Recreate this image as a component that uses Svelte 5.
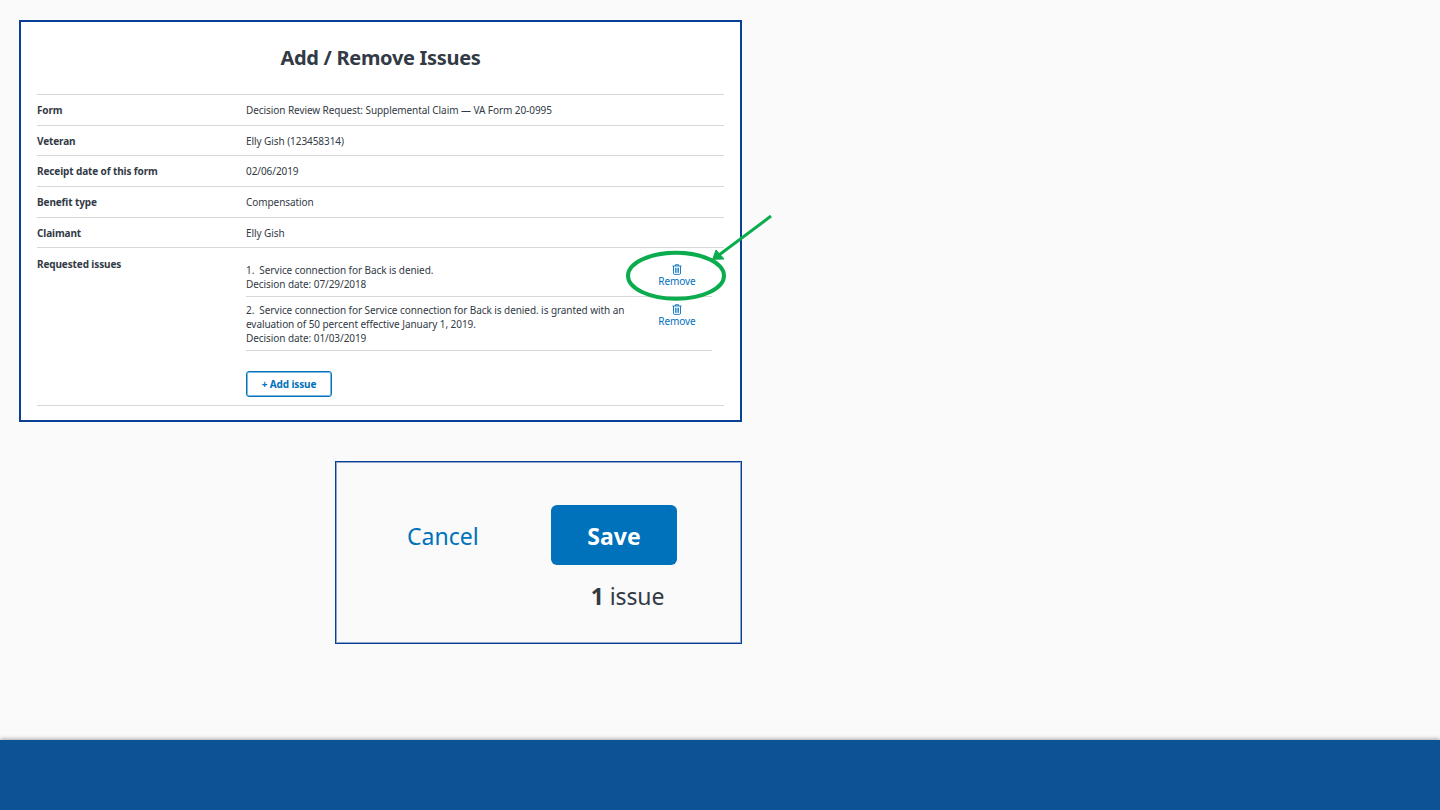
<script lang="ts">
	const rows = [
		{ label: 'Form', value: 'Decision Review Request: Supplemental Claim — VA Form 20-0995' },
		{ label: 'Veteran', value: 'Elly Gish (123458314)' },
		{ label: 'Receipt date of this form', value: '02/06/2019' },
		{ label: 'Benefit type', value: 'Compensation' },
		{ label: 'Claimant', value: 'Elly Gish' }
	];

	const issues = [
		{
			n: 1,
			text: 'Service connection for Back is denied.',
			date: '07/29/2018'
		},
		{
			n: 2,
			text: 'Service connection for Service connection for Back is denied. is granted with an evaluation of 50 percent effective January 1, 2019.',
			date: '01/03/2019'
		}
	];
</script>

<div class="page">
	<main class="content">
		<section class="panel form">
			<h1>Add / Remove Issues</h1>
			<div class="table">
				{#each rows as row}
					<div class="row">
						<div class="label">{row.label}</div>
						<div class="value">{row.value}</div>
					</div>
				{/each}
				<div class="row issues-row">
					<div class="label">Requested issues</div>
					<div class="issues">
						{#each issues as issue}
							<div class="issue">
								<div class="issue-text">
									<div>{issue.n}.&nbsp; {issue.text}</div>
									<div>Decision date: {issue.date}</div>
								</div>
								<button class="remove">
									<svg width="10" height="11" viewBox="0 0 10 11" fill="none" stroke="currentColor" stroke-width="0.9">
										<path d="M0.5 2h9M3.5 2V0.7h3V2M1.5 2v7.2c0 .7.4 1.2 1 1.2h5c.6 0 1-.5 1-1.2V2M3.6 3.8v5M5 3.8v5M6.4 3.8v5" />
									</svg>
									<span>Remove</span>
								</button>
							</div>
						{/each}
						<button class="add">+ Add issue</button>
					</div>
				</div>
			</div>
			<svg class="callout" width="165" height="90" viewBox="0 0 165 90" fill="none">
				<ellipse cx="67" cy="60.7" rx="48" ry="23" stroke="#0bac4e" stroke-width="4" />
				<path d="M162 1 L110 40" stroke="#0bac4e" stroke-width="3" />
				<path d="M103.7 44.3 L107 35 L115 44 Z" fill="#0bac4e" stroke="#0bac4e" stroke-width="1" />
			</svg>
		</section>

		<section class="panel actions">
			<div class="buttons">
				<button class="cancel">Cancel</button>
				<div class="save-wrap">
					<button class="save">Save</button>
					<div class="count"><b>1</b> issue</div>
				</div>
			</div>
		</section>
	</main>
	<footer></footer>
</div>

<style>
	:global(body) {
		margin: 0;
		background: #fafafa;
		font-family: 'Noto Sans', 'Open Sans', sans-serif;
	}

	.page {
		height: 810px;
		display: flex;
		flex-direction: column;
		overflow: hidden;
	}

	.content {
		flex: 1;
		width: 723px;
		margin-left: 19px;
		padding-top: 20px;
		display: flex;
		flex-direction: column;
		align-items: flex-end;
		gap: 39px;
	}

	.panel {
		box-sizing: border-box;
		border: 2px solid #0a3f96;
	}

	.form {
		position: relative;
		width: 723px;
		height: 402px;
		background: #fff;
		padding: 0 16px;
	}

	h1 {
		margin: 0;
		height: 70px;
		padding-bottom: 2px;
		display: flex;
		align-items: center;
		justify-content: center;
		font-size: 20px;
		font-weight: 700;
		color: #323a45;
		letter-spacing: -0.3px;
	}

	.table {
		border-top: 1px solid #d6d7d9;
	}

	.row {
		box-sizing: border-box;
		display: grid;
		grid-template-columns: 209px 1fr;
		align-items: center;
		height: 30.7px;
		border-bottom: 1px solid #d6d7d9;
		font-size: 10px;
		color: #323a45;
		letter-spacing: -0.07px;
	}

	.label {
		font-weight: 700;
		letter-spacing: -0.12px;
	}

	.issues-row {
		height: 158px;
		align-items: start;
	}

	.issues-row .label {
		padding-top: 9px;
	}

	.issues {
		width: 466px;
		padding-top: 9px;
	}

	.issue {
		display: flex;
		justify-content: space-between;
		line-height: 14px;
		padding: 6px 0 5px;
		border-bottom: 1px solid #d6d7d9;
	}

	.issue-text {
		width: 385px;
	}

	.remove {
		width: 62px;
		margin-top: 1px;
		margin-right: 4px;
		padding: 0;
		border: 0;
		background: none;
		color: #0071bb;
		font: inherit;
		letter-spacing: inherit;
		line-height: 12px;
		display: flex;
		flex-direction: column;
		align-items: center;
		align-self: flex-start;
	}

	.add {
		display: block;
		margin-top: 20px;
		width: 86px;
		height: 26px;
		padding: 0;
		border: 1px solid #0071bb;
		box-shadow: inset 0 0 0 1px rgba(0, 113, 187, 0.5);
		border-radius: 3px;
		background: #fff;
		color: #0071bb;
		font: inherit;
		font-weight: 700;
		letter-spacing: -0.12px;
	}

	.callout {
		position: absolute;
		left: 588px;
		top: 193px;
		overflow: visible;
	}

	.actions {
		width: 407px;
		height: 183px;
		border-width: 1px;
		box-shadow: inset 0 0 0 1px rgba(10, 63, 150, 0.45);
		background: #fafafa;
		padding: 43px 0 0 71px;
	}

	.buttons {
		display: flex;
		align-items: flex-start;
	}

	.cancel {
		width: 144px;
		height: 60px;
		padding: 2px 0 0;
		border: 0;
		background: none;
		color: #0071bb;
		font: inherit;
		font-size: 23px;
		text-align: left;
	}

	.save-wrap {
		width: 126px;
		display: flex;
		flex-direction: column;
		align-items: center;
	}

	.save {
		width: 126px;
		height: 60px;
		padding: 2px 0 0;
		border: 0;
		border-radius: 6px;
		background: #0071bb;
		color: #fff;
		font: inherit;
		font-size: 23px;
		font-weight: 700;
	}

	.count {
		margin-top: 15px;
		padding-left: 27px;
		font-size: 23px;
		line-height: 32px;
		color: #323a45;
		white-space: nowrap;
		letter-spacing: -0.1px;
	}

	footer {
		height: 70px;
		background: #0c5396;
		box-shadow: 0 -1px 4px rgba(0, 0, 0, 0.35);
	}
</style>
